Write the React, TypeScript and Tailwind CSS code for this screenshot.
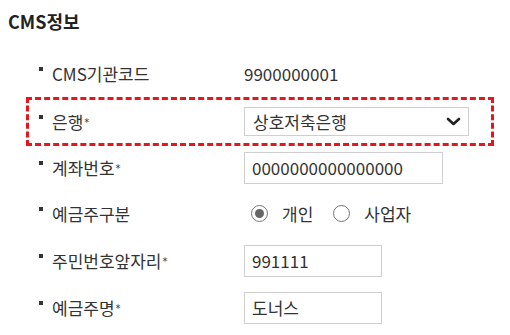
const font = "font-['Malgun_Gothic','Noto_Sans_CJK_KR',sans-serif]";

function Label({ text, required }: { text: string; required?: boolean }) {
  return (
    <div className="w-[215px] pl-[10px] flex items-start shrink-0">
      <span className="mt-[4px] mr-[9px] w-[4px] h-[4px] bg-[#333]" />
      <span className="text-[17px] leading-[22px] text-[#333] flex items-center">
        {text}
        {required && <span className="font-['DejaVu_Sans',sans-serif] text-[10px] leading-none ml-[1px] mt-[2px]">*</span>}
      </span>
    </div>
  );
}

function Radio({ checked, label }: { checked?: boolean; label: string }) {
  return (
    <label className="flex items-center gap-[14px]">
      <span className="w-[17px] h-[17px] rounded-full border-[1.5px] border-[#777] bg-white flex items-center justify-center">
        {checked && <span className="w-[9px] h-[9px] rounded-full bg-[#666]" />}
      </span>
      <span className="text-[17px] text-[#333]">{label}</span>
    </label>
  );
}

function Field({ value, width }: { value: string; width: string }) {
  return (
    <div className={`${width} h-[32px] border border-[#cfcfcf] bg-white px-[7px] flex items-center text-[17px] text-[#333]`}>
      {value}
    </div>
  );
}

export default function App() {
  return (
    <div className={`w-[510px] h-[335px] bg-white ${font} overflow-hidden`}>
      <h2 className="pl-[8px] pt-[9px] text-[18px] leading-[24px] font-bold text-[#222]">CMS정보</h2>

      <div className="mt-[17px] ml-[26px] w-[468px] flex flex-col">
        {/* CMS기관코드 */}
        <div className="h-[47px] border-[3px] border-transparent flex items-center">
          <Label text="CMS기관코드" />
          <span className="text-[17px] text-[#333]">9900000001</span>
        </div>

        {/* 은행 - highlighted */}
        <div className="h-[49px] border-[3px] border-dashed border-[#e8161b] flex items-center">
          <Label text="은행" required />
          <div className="w-[225px] h-[29px] border border-[#cfcfcf] bg-white pl-[8px] pr-[7px] flex items-center justify-between">
            <span className="text-[17px] text-[#333]">상호저축은행</span>
            <svg width="15" height="9" viewBox="0 0 15 9" fill="none">
              <path d="M2 2l5.5 5 5.5-5" stroke="#222" strokeWidth="2.6" strokeLinecap="round" strokeLinejoin="round" />
            </svg>
          </div>
        </div>

        {/* 계좌번호 */}
        <div className="h-[44px] border-[3px] border-transparent flex items-center">
          <Label text="계좌번호" required />
          <Field value="0000000000000000" width="w-[199px]" />
        </div>

        {/* 예금주구분 */}
        <div className="h-[47px] border-[3px] border-transparent flex items-center">
          <Label text="예금주구분" />
          <div className="ml-[7px] flex items-center gap-[20px]">
            <Radio checked label="개인" />
            <Radio label="사업자" />
          </div>
        </div>

        {/* 주민번호앞자리 */}
        <div className="h-[47px] border-[3px] border-transparent flex items-center">
          <Label text="주민번호앞자리" required />
          <Field value="991111" width="w-[138px]" />
        </div>

        {/* 예금주명 */}
        <div className="h-[47px] border-[3px] border-transparent flex items-center">
          <Label text="예금주명" required />
          <Field value="도너스" width="w-[138px]" />
        </div>
      </div>
    </div>
  );
}
